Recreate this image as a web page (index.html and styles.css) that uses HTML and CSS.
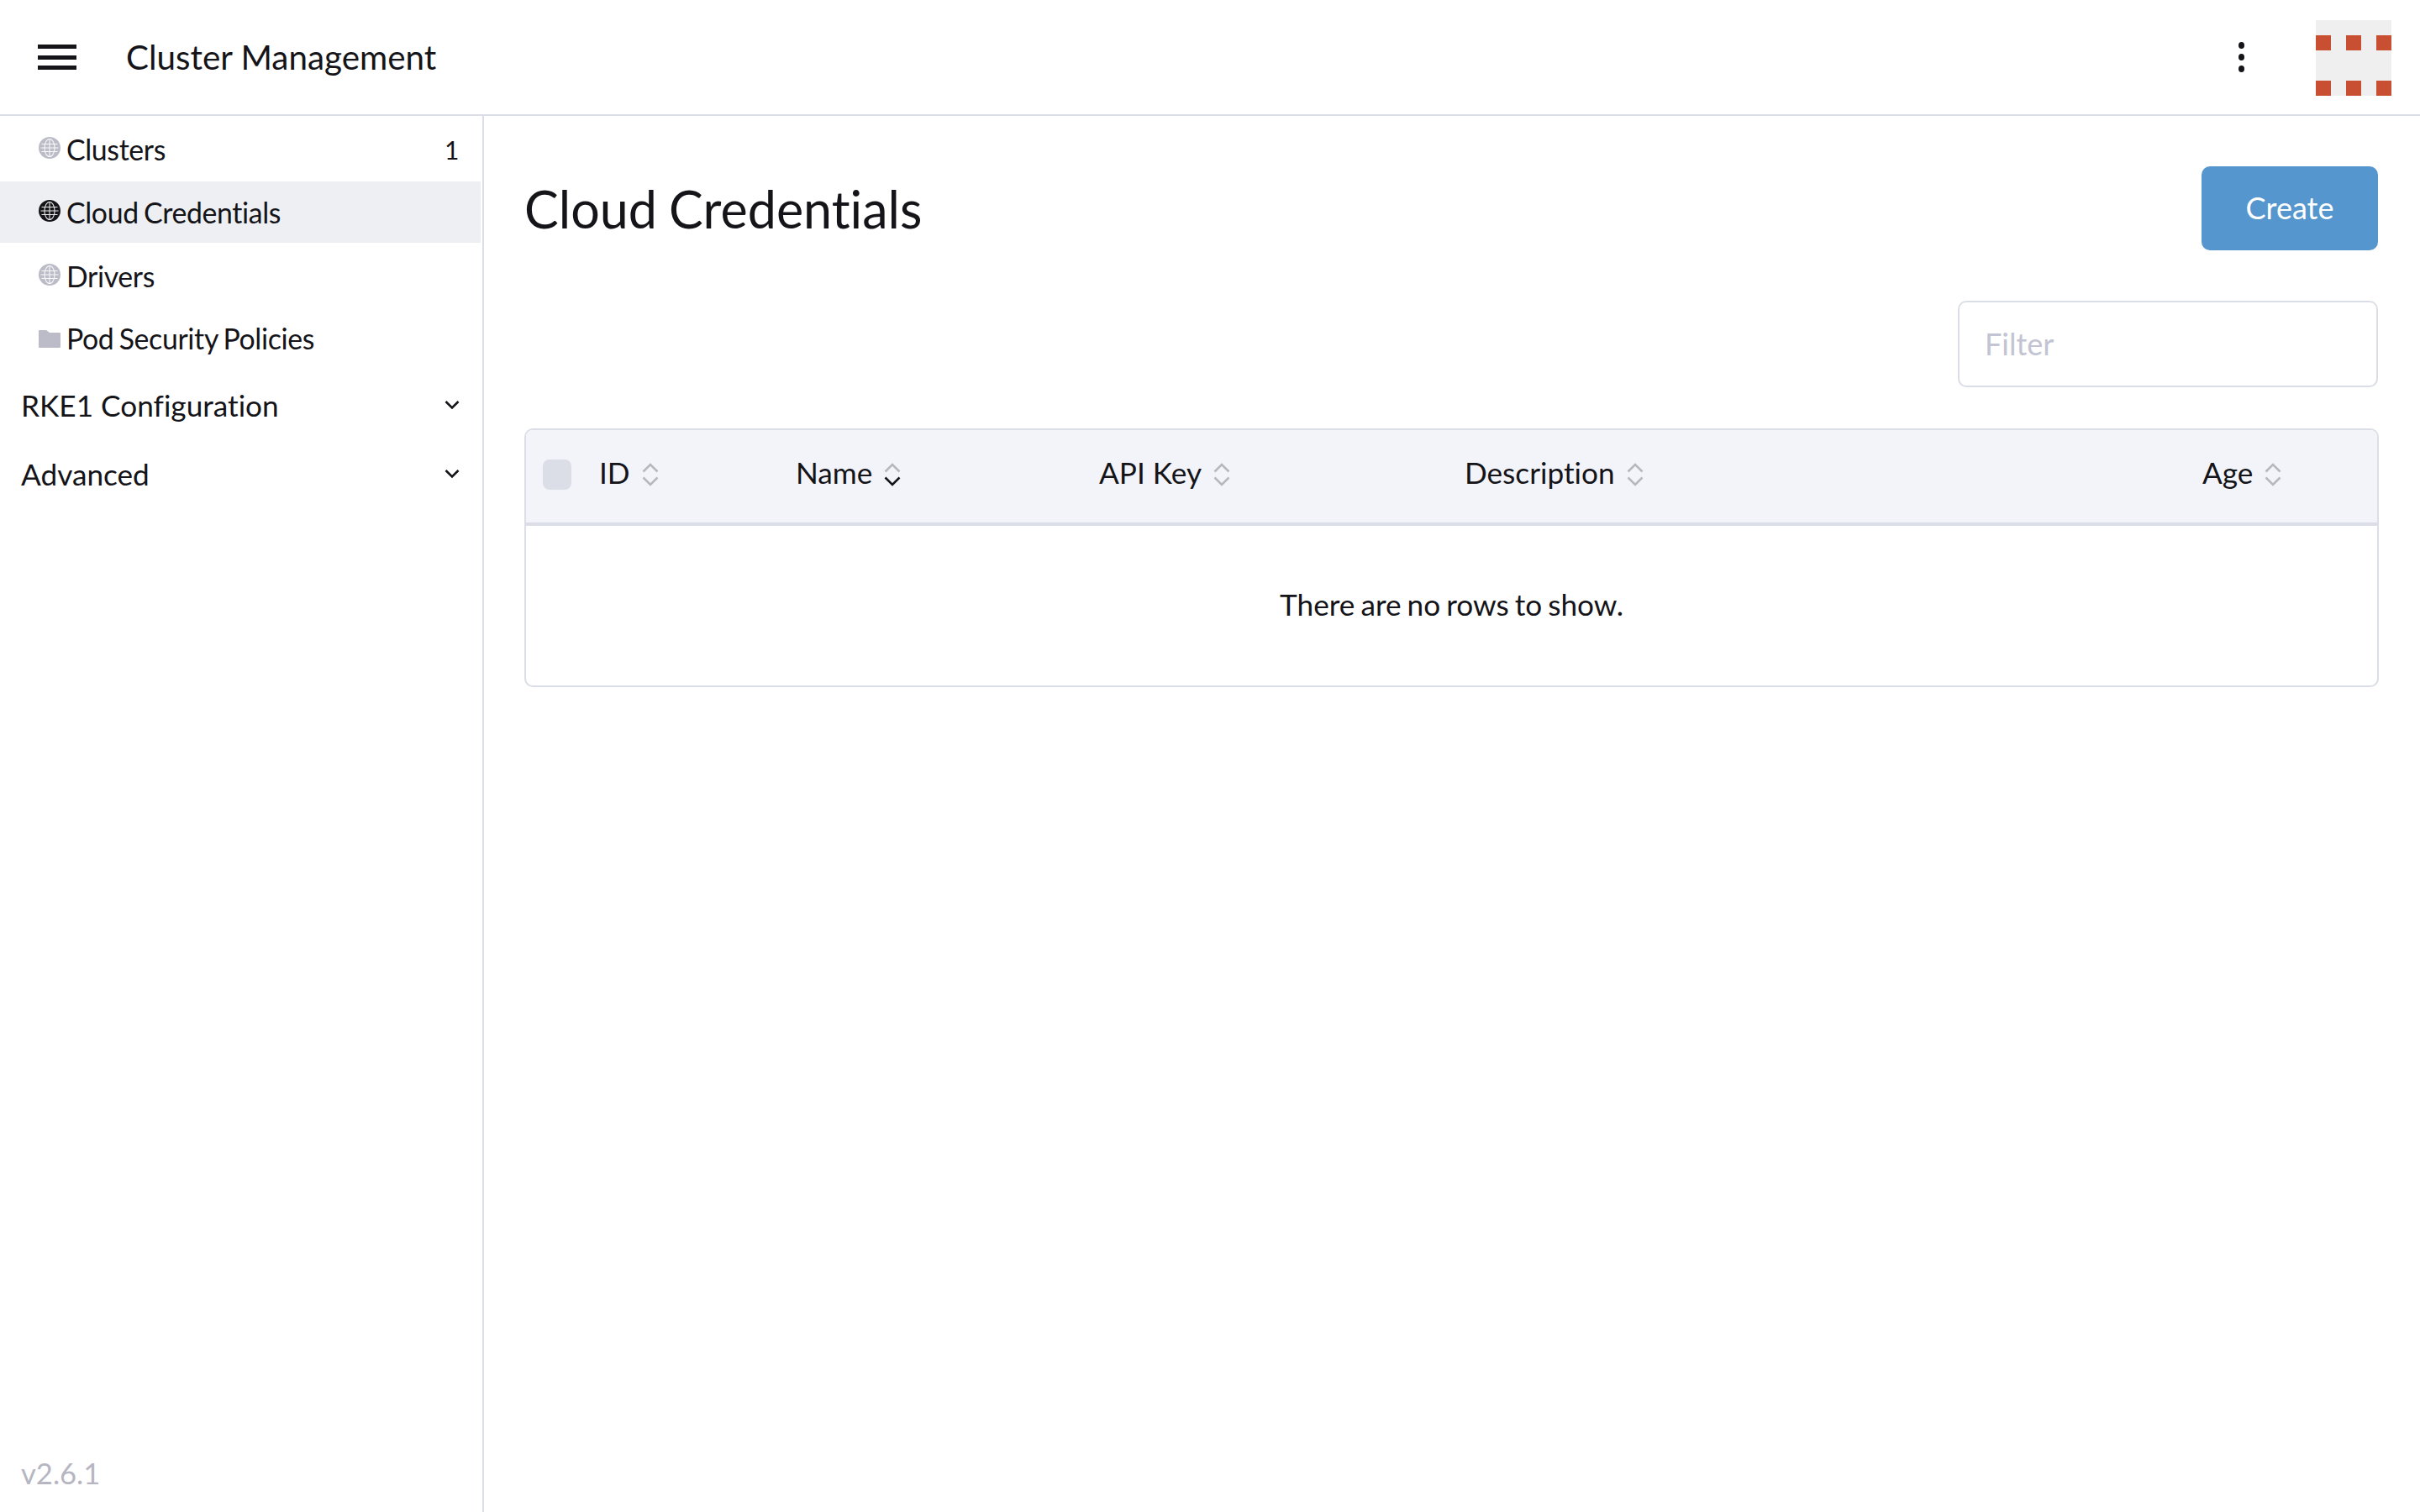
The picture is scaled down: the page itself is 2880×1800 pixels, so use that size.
FILE: index.html
```html
<!DOCTYPE html>
<html lang="en">
<head>
    <meta charset="UTF-8">
    <title>Cloud Credentials</title>
    <link rel="stylesheet" href="styles.css">
</head>
<body>
    <svg class="defs" width="0" height="0">
        <symbol id="globe" viewBox="0 0 26 26">
            <circle cx="13" cy="13" r="13" fill="currentColor"/>
            <g fill="none" stroke="#fff" stroke-width="1.1" opacity="0.9">
                <ellipse cx="13" cy="13" rx="6" ry="10.5"/>
                <path d="M13 2.5v21M3.5 8.5h19M2.5 13h21M3.5 17.5h19"/>
            </g>
        </symbol>
        <symbol id="sort" viewBox="0 0 20 12">
            <path d="M1.5 10.5l8.5-8.5 8.5 8.5" fill="none" stroke="currentColor" stroke-width="2.6"/>
        </symbol>
    </svg>

    <header class="topbar">
        <button class="menu-btn" type="button" aria-label="Menu"><span></span><span></span><span></span></button>
        <div class="product">Cluster Management</div>
        <button class="kebab" type="button" aria-label="More"><span></span><span></span><span></span></button>
        <div class="logo">
            <i></i><i></i><i></i>
            <i></i><i></i><i></i>
        </div>
    </header>

    <div class="layout">
        <nav class="sidebar">
            <a class="nav-item">
                <svg class="nav-icon"><use href="#globe"/></svg>
                <span class="nav-label">Clusters</span>
                <span class="count">1</span>
            </a>
            <a class="nav-item active">
                <svg class="nav-icon"><use href="#globe"/></svg>
                <span class="nav-label">Cloud Credentials</span>
            </a>
            <a class="nav-item">
                <svg class="nav-icon"><use href="#globe"/></svg>
                <span class="nav-label">Drivers</span>
            </a>
            <a class="nav-item">
                <svg class="nav-icon folder" viewBox="0 0 26 21"><path d="M0 1a1 1 0 0 1 1-1h8l4 3h12a1 1 0 0 1 1 1v16a1 1 0 0 1-1 1H1a1 1 0 0 1-1-1z" fill="currentColor"/></svg>
                <span class="nav-label">Pod Security Policies</span>
            </a>
            <div class="nav-group">
                <span>RKE1 Configuration</span>
                <svg class="chevron" viewBox="0 0 18 12"><path d="M1.5 2l7.5 7.5L16.5 2" fill="none" stroke="currentColor" stroke-width="2.6"/></svg>
            </div>
            <div class="nav-group">
                <span>Advanced</span>
                <svg class="chevron" viewBox="0 0 18 12"><path d="M1.5 2l7.5 7.5L16.5 2" fill="none" stroke="currentColor" stroke-width="2.6"/></svg>
            </div>
            <div class="version">v2.6.1</div>
        </nav>

        <main class="content">
            <div class="page-head">
                <h1>Cloud Credentials</h1>
                <button class="btn-create" type="button">Create</button>
            </div>
            <div class="filter-row">
                <input class="filter" type="text" placeholder="Filter">
            </div>
            <div class="table-wrap">
                <table class="grid">
                    <colgroup>
                        <col class="col-check"><col class="col-id"><col class="col-name"><col class="col-key"><col class="col-desc"><col>
                    </colgroup>
                    <thead>
                        <tr>
                            <th><span class="checkbox"></span></th>
                            <th><span class="th-in">ID <span class="sort"><svg><use href="#sort"/></svg><svg class="down"><use href="#sort"/></svg></span></span></th>
                            <th><span class="th-in">Name <span class="sort"><svg><use href="#sort"/></svg><svg class="down on"><use href="#sort"/></svg></span></span></th>
                            <th><span class="th-in">API Key <span class="sort"><svg><use href="#sort"/></svg><svg class="down"><use href="#sort"/></svg></span></span></th>
                            <th><span class="th-in">Description <span class="sort"><svg><use href="#sort"/></svg><svg class="down"><use href="#sort"/></svg></span></span></th>
                            <th><span class="th-in">Age <span class="sort"><svg><use href="#sort"/></svg><svg class="down"><use href="#sort"/></svg></span></span></th>
                        </tr>
                    </thead>
                    <tbody>
                        <tr><td class="no-rows" colspan="6">There are no rows to show.</td></tr>
                    </tbody>
                </table>
            </div>
        </main>
    </div>
</body>
</html>
```

FILE: styles.css
```css
* {
    box-sizing: border-box;
}
html, body {
    margin: 0;
    height: 100%;
}
body {
    font-family: Lato, "Open Sans", sans-serif;
    font-variant-ligatures: none;
    color: #141419;
    background-color: #fff;
    display: flex;
    flex-direction: column;
    overflow: hidden;
}
.defs {
    position: absolute;
}
button {
    font-family: inherit;
    border: none;
    background: none;
    padding: 0;
}

/* top bar */
.topbar {
    height: 138px;
    flex: none;
    display: flex;
    align-items: center;
    border-bottom: 2px solid #dcdee7;
    padding-left: 45px;
}
.menu-btn {
    width: 46px;
    height: 30px;
    display: flex;
    flex-direction: column;
    justify-content: space-between;
}
.menu-btn span {
    display: block;
    height: 5px;
    background-color: #141419;
}
.product {
    font-size: 40.4px;
    margin-left: 59px;
    padding-bottom: 2px;
    flex: 1;
}
.kebab {
    width: 8px;
    height: 36px;
    display: flex;
    flex-direction: column;
    justify-content: space-between;
    margin-right: 84px;
}
.kebab span {
    display: block;
    width: 7px;
    height: 8px;
    border-radius: 50%;
    background-color: #141419;
}
.logo {
    width: 90px;
    height: 90px;
    margin: 2px 34px 0 0;
    padding-top: 18px;
    background-color: #efefef;
    display: grid;
    grid-template-columns: repeat(3, 18px);
    grid-template-rows: 18px 18px;
    justify-content: space-between;
    row-gap: 36px;
}
.logo i {
    background-color: #c84f32;
}

/* sidebar */
.layout {
    flex: 1;
    display: flex;
    min-height: 0;
}
.sidebar {
    width: 576px;
    flex: none;
    display: flex;
    flex-direction: column;
    border-right: 2px solid #dcdee7;
    padding: 3px 2px 0 0;
}
.nav-item {
    height: 73px;
    margin-bottom: 2px;
    display: flex;
    align-items: center;
    padding: 0 26px 0 46px;
    font-size: 33.8px;
    letter-spacing: -0.35px;
    word-spacing: -2px;
}
.nav-item.active {
    background-color: #edeff3;
    margin-bottom: 3px;
}
.nav-item.active + .nav-item {
    margin-bottom: 1px;
}
.nav-icon {
    width: 26px;
    height: 26px;
    flex: none;
    margin-right: 7px;
    color: #bcbcc8;
    position: relative;
    top: -2px;
}
.nav-icon.folder {
    height: 21px;
    top: 1px;
}
.active .nav-icon {
    color: #141419;
}
.nav-label {
    flex: 1;
}
.count {
    font-size: 30px;
}
.nav-group {
    height: 82px;
    display: flex;
    align-items: center;
    justify-content: space-between;
    padding: 0 25px 0 25px;
    font-size: 35.2px;
}
.chevron {
    width: 18px;
    height: 12px;
    position: relative;
    top: 0;
}
.version {
    margin-top: auto;
    padding: 0 0 26px 25px;
    font-size: 34.6px;
    color: #b6b6c2;
}

/* content */
.content {
    flex: 1;
    padding: 60px 49px 0 48px;
}
.page-head {
    display: flex;
    align-items: center;
    justify-content: space-between;
    height: 100px;
    margin-right: 1px;
}
h1 {
    margin: 0;
    font-size: 61px;
    font-weight: 400;
    word-spacing: -1.5px;
}
.btn-create {
    width: 210px;
    height: 100px;
    border-radius: 10px;
    background-color: #5696ce;
    color: #fff;
    font-size: 36px;
    padding-bottom: 2px;
}
.filter-row {
    display: flex;
    justify-content: flex-end;
    margin: 60px 1px 49px 0;
}
.filter {
    width: 500px;
    height: 103px;
    border: 2px solid #dcdee7;
    border-radius: 10px;
    padding: 0 30px 2px;
    font: 36px Lato, sans-serif;
    outline: none;
}
.filter::placeholder {
    color: #c3c4d3;
    opacity: 1;
}
.table-wrap {
    border: 2px solid #dcdee7;
    border-radius: 10px;
    overflow: hidden;
    height: 308px;
}
.grid {
    width: 100%;
    border-collapse: collapse;
    table-layout: fixed;
}
.col-check { width: 87px; }
.col-id { width: 234px; }
.col-name { width: 361px; }
.col-key { width: 435px; }
.col-desc { width: 878px; }
th {
    height: 112px;
    padding: 0 0 7px;
    text-align: left;
    font-size: 35.2px;
    font-weight: 400;
    background-color: #f3f4f9;
    border-bottom: 4px solid #dcdee7;
}
.th-in {
    display: inline-flex;
    align-items: center;
    margin-bottom: 3px;
}
.checkbox {
    display: block;
    width: 34px;
    height: 36px;
    margin: 2px 0 0 20px;
    border-radius: 8px;
    background-color: #dcdee7;
}
.sort {
    display: inline-flex;
    flex-direction: column;
    margin-left: 14px;
    gap: 4px;
    color: #b7b7bd;
    position: relative;
    top: 3px;
}
.sort svg {
    display: block;
    width: 20px;
    height: 12px;
}
.sort .down {
    transform: scaleY(-1);
}
.sort .on {
    color: #141419;
}
.no-rows {
    height: 190px;
    text-align: center;
    font-size: 35.2px;
    word-spacing: -2px;
    padding-bottom: 4px;
}
```
